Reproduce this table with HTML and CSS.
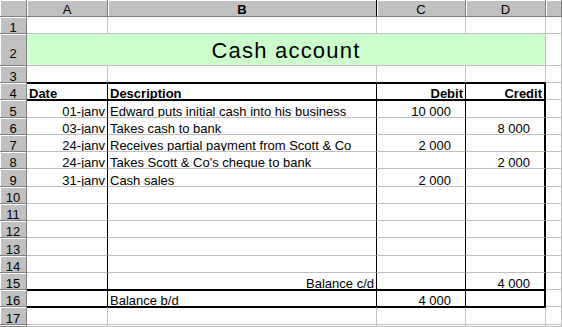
FILE: index.html
```html
<!DOCTYPE html>
<html lang="fr">
<head>
    <meta charset="UTF-8">
    <meta name="viewport" content="width=device-width, initial-scale=1.0">
    <title>Cash account</title>
    <link rel="stylesheet" href="styles.css">
</head>
<body>

    <div class="sheet">
        <!-- column letters -->
        <div class="row">
            <div class="corner"></div>
            <div class="col-head">A</div>
            <div class="col-head active">B</div>
            <div class="col-head">C</div>
            <div class="col-head">D</div>
            <div class="col-head"></div>
        </div>

        <div class="row">
            <div class="row-head">1</div>
            <div class="cell"></div><div class="cell"></div><div class="cell"></div><div class="cell"></div><div class="cell"></div>
        </div>

        <div class="row">
            <div class="row-head tall">2</div>
            <div class="cell title">Cash account</div>
            <div class="cell"></div>
        </div>

        <div class="row edge-bottom">
            <div class="row-head">3</div>
            <div class="cell"></div><div class="cell"></div><div class="cell"></div><div class="cell"></div><div class="cell"></div>
        </div>

        <div class="row ledger edge-top edge-bottom">
            <div class="row-head">4</div>
            <div class="cell bold">Date</div>
            <div class="cell bold">Description</div>
            <div class="cell bold right">Debit</div>
            <div class="cell bold right">Credit</div>
            <div class="cell"></div>
        </div>

        <div class="row ledger edge-top">
            <div class="row-head">5</div>
            <div class="cell right">01-janv</div>
            <div class="cell">Edward puts initial cash into his business</div>
            <div class="cell amount">10 000</div>
            <div class="cell amount"></div>
            <div class="cell"></div>
        </div>

        <div class="row ledger">
            <div class="row-head">6</div>
            <div class="cell right">03-janv</div>
            <div class="cell">Takes cash to bank</div>
            <div class="cell amount"></div>
            <div class="cell amount">8 000</div>
            <div class="cell"></div>
        </div>

        <div class="row ledger">
            <div class="row-head">7</div>
            <div class="cell right">24-janv</div>
            <div class="cell">Receives partial payment from Scott &amp; Co</div>
            <div class="cell amount">2 000</div>
            <div class="cell amount"></div>
            <div class="cell"></div>
        </div>

        <div class="row ledger">
            <div class="row-head">8</div>
            <div class="cell right">24-janv</div>
            <div class="cell">Takes Scott &amp; Co's cheque to bank</div>
            <div class="cell amount"></div>
            <div class="cell amount">2 000</div>
            <div class="cell"></div>
        </div>

        <div class="row ledger">
            <div class="row-head">9</div>
            <div class="cell right">31-janv</div>
            <div class="cell">Cash sales</div>
            <div class="cell amount">2 000</div>
            <div class="cell amount"></div>
            <div class="cell"></div>
        </div>

        <div class="row ledger">
            <div class="row-head">10</div>
            <div class="cell"></div><div class="cell"></div><div class="cell"></div><div class="cell"></div><div class="cell"></div>
        </div>

        <div class="row ledger">
            <div class="row-head">11</div>
            <div class="cell"></div><div class="cell"></div><div class="cell"></div><div class="cell"></div><div class="cell"></div>
        </div>

        <div class="row ledger">
            <div class="row-head">12</div>
            <div class="cell"></div><div class="cell"></div><div class="cell"></div><div class="cell"></div><div class="cell"></div>
        </div>

        <div class="row ledger">
            <div class="row-head">13</div>
            <div class="cell"></div><div class="cell"></div><div class="cell"></div><div class="cell"></div><div class="cell"></div>
        </div>

        <div class="row ledger">
            <div class="row-head">14</div>
            <div class="cell"></div><div class="cell"></div><div class="cell"></div><div class="cell"></div><div class="cell"></div>
        </div>

        <div class="row ledger edge-bottom">
            <div class="row-head">15</div>
            <div class="cell"></div>
            <div class="cell right">Balance c/d</div>
            <div class="cell amount"></div>
            <div class="cell amount">4 000</div>
            <div class="cell"></div>
        </div>

        <div class="row ledger edge-top edge-bottom">
            <div class="row-head">16</div>
            <div class="cell"></div>
            <div class="cell">Balance b/d</div>
            <div class="cell amount">4 000</div>
            <div class="cell amount"></div>
            <div class="cell"></div>
        </div>

        <div class="row edge-top">
            <div class="row-head">17</div>
            <div class="cell"></div><div class="cell"></div><div class="cell"></div><div class="cell"></div><div class="cell"></div>
        </div>

        <!-- next row, only its top edge shows -->
        <div class="row">
            <div class="row-head"></div>
            <div class="cell"></div><div class="cell"></div><div class="cell"></div><div class="cell"></div><div class="cell"></div>
        </div>
    </div>

</body>
</html>
```

FILE: styles.css
```css
body {
    margin: 0;
    padding: 0;
    background-color: #fff;
    font-family: "Liberation Sans", Arial, sans-serif;
    font-size: 13px;
    color: #000;
    overflow: hidden;
}
.sheet {
    display: grid;
    grid-template-columns: 27px 81px 269px 89px 80px 16px;
    grid-template-rows: 17px 17px 32px 17px repeat(14, 17.25px) 1fr;
    width: 562px;
    height: 327px;
    overflow: hidden;
}
.row {
    display: contents;
}

/* grey headers with the raised edge */
.corner, .col-head, .row-head {
    box-sizing: border-box;
    background-color: #c0c0c0;
    border-right: 1px solid #808080;
    border-bottom: 1px solid #808080;
    box-shadow: inset 1px 1px 0 #fff;
    display: flex;
    align-items: flex-end;
    justify-content: center;
    line-height: 11px;
    padding-bottom: 1px;
    white-space: nowrap;
}
.col-head.active {
    font-weight: bold;
    border-right-color: #000;
}
.row-head {
    padding-bottom: 0;
}
.row-head.tall {
    padding-bottom: 6px;
}

/* plain cells */
.cell {
    box-sizing: border-box;
    border-right: 1px solid #c0c0c0;
    border-bottom: 1px solid #c0c0c0;
    display: flex;
    align-items: flex-end;
    line-height: 11px;
    padding: 0 2px;
    white-space: nowrap;
    overflow: hidden;
}
.bold {
    font-weight: bold;
}
.right {
    justify-content: flex-end;
}
.amount {
    justify-content: flex-end;
    padding-right: 14px;
}
.title {
    grid-column: span 4;
    justify-content: center;
    background-color: #ccffcc;
    font-size: 22px;
    line-height: 22px;
    letter-spacing: 1.2px;
    padding-bottom: 3px;
}

/* ledger box: thin inner rules, heavy right side and heavy lines between sections */
.ledger .cell:nth-child(-n+4) {
    border-right-color: #000;
}
.ledger .cell:nth-child(5) {
    border-right: 2px solid #000;
}
.edge-top .cell:nth-child(-n+5) {
    border-top: 1px solid #000;
}
.edge-bottom .cell:nth-child(-n+5) {
    border-bottom-color: #000;
}
```
